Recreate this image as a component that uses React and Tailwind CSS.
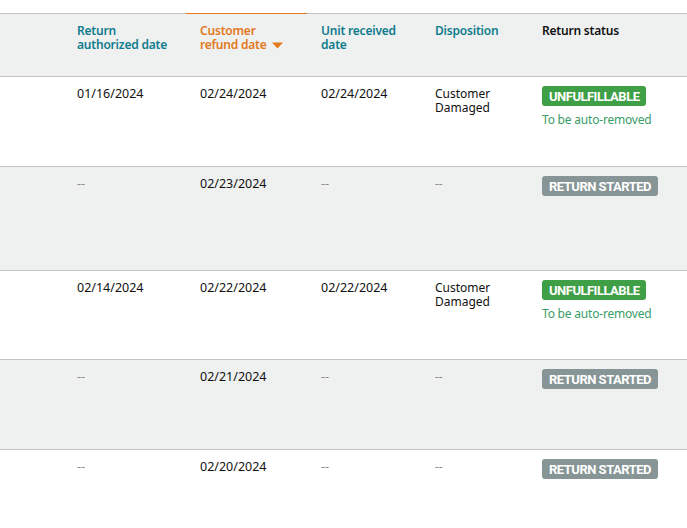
import React from "react";

const font = { fontFamily: '"Noto Sans", "Open Sans", Arial, sans-serif' };

function Badge({ kind }) {
  const green = kind === "unf";
  return (
    <span
      className={`inline-flex items-center h-[20px] rounded-[3px] px-[7px] text-[13px] font-bold tracking-[-0.5px] text-white leading-none ${
        green ? "bg-[#3f9f47]" : "bg-[#879596]"
      }`}
      style={{ fontFamily: 'Roboto, "Liberation Sans", sans-serif' }}
    >
      {green ? "UNFULFILLABLE" : "RETURN STARTED"}
    </span>
  );
}

const rows = [
  { auth: "01/16/2024", refund: "02/24/2024", recv: "02/24/2024", disp: true, status: "unf", h: "h-[90px]", bg: "bg-white" },
  { auth: null, refund: "02/23/2024", recv: null, disp: false, status: "rs", h: "h-[104px]", bg: "bg-[#eff0f0]" },
  { auth: "02/14/2024", refund: "02/22/2024", recv: "02/22/2024", disp: true, status: "unf", h: "h-[89px]", bg: "bg-white" },
  { auth: null, refund: "02/21/2024", recv: null, disp: false, status: "rs", h: "h-[90px]", bg: "bg-[#eff0f0]" },
  { auth: null, refund: "02/20/2024", recv: null, disp: false, status: "rs", h: "h-[80px]", bg: "bg-white", last: true },
];

const grid = "grid grid-cols-[63px_123px_121px_114px_107px_1fr]";

function Dash() {
  return <span className="text-[#8a8a8a]">--</span>;
}

export default function App() {
  return (
    <div className="w-[687px] h-[528px] bg-white overflow-hidden text-[12.5px] leading-[14px] text-[#111]" style={font}>
      <div className="h-[13px]" />
      <div className={`${grid} h-[64px] bg-[#eff0f0] border-y border-[#c4c4c4] font-semibold text-[12px] tracking-[-0.2px]`}>
        <div />
        <div className="px-[14px] pt-[10px] text-[#0f7c8d]">Return<br />authorized date</div>
        <div className="relative px-[14px] pt-[10px] text-[#e3781c]">
          <div className="absolute left-0 right-0 -top-[1px] h-[1px] bg-[#e3781c]" />
          Customer<br />
          <span className="inline-flex items-center gap-[5px]">
            refund date
            <svg width="11" height="7" viewBox="0 0 11 7"><path d="M0 0.5 L11 0.5 L5.5 6.5 Z" fill="#e3781c" /></svg>
          </span>
        </div>
        <div className="px-[14px] pt-[10px] text-[#0f7c8d]">Unit received<br />date</div>
        <div className="px-[14px] pt-[10px] text-[#0f7c8d]">Disposition</div>
        <div className="px-[14px] pt-[10px] text-[#111]">Return status</div>
      </div>
      {rows.map((r, i) => (
        <div key={i} className={`${grid} ${r.h} ${r.bg} ${r.last ? "" : "border-b border-[#c4c4c4]"}`}>
          <div />
          <div className="px-[14px] pt-[10px]">{r.auth ? r.auth : <Dash />}</div>
          <div className="px-[14px] pt-[10px]">{r.refund}</div>
          <div className="px-[14px] pt-[10px]">{r.recv ? r.recv : <Dash />}</div>
          <div className="px-[14px] pt-[10px] text-[12px]">{r.disp ? <>Customer<br />Damaged</> : <Dash />}</div>
          <div className="px-[14px] pt-[9px]">
            <Badge kind={r.status} />
            {r.status === "unf" && (
              <div className="mt-[7px] text-[12px] tracking-[-0.2px] text-[#3a9c66]">To be auto-removed</div>
            )}
          </div>
        </div>
      ))}
    </div>
  );
}
